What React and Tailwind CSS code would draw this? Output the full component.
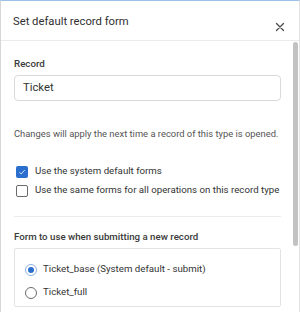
export default function App() {
  return (
    <div
      className="w-[300px] h-[312px] bg-white border-t border-t-[#9cc0e6] border-l border-l-[#d6d6d6] border-r border-r-[#e3e3e3] flex flex-col overflow-hidden text-[#333]"
      style={{ fontFamily: "Roboto, 'Liberation Sans', sans-serif" }}
    >
      <div className="h-[40px] shrink-0 border-b border-[#ebebeb] flex justify-between pl-[12px] pr-[14px]">
        <div className="pt-[12px] text-[11.25px] leading-[18px] text-[#2f2f2f]">Set default record form</div>
        <div className="pt-[21px]">
          <svg width="10" height="10" viewBox="0 0 10 10" className="block">
            <path d="M1.5 1.5 L8.5 8.5 M8.5 1.5 L1.5 8.5" stroke="#4a4a4a" strokeWidth="1.3" strokeLinecap="round" />
          </svg>
        </div>
      </div>
      <div className="flex flex-1 min-h-0">
        <div className="flex-1 min-w-0 pl-[13px] pr-[12px] flex flex-col">
          <div className="pt-[15px] text-[9.75px] leading-[16px] font-medium text-[#3a3a3a]">Record</div>
          <div className="mt-[3px] h-[26px] border border-[#d9d9d9] rounded-[4px] flex items-center pl-[8px] text-[11.25px] text-[#333]">
            Ticket
          </div>
          <div className="mt-[26px] text-[9.4px] leading-[14px] text-[#555] whitespace-nowrap">
            Changes will apply the next time a record of this type is opened.
          </div>
          <div className="mt-[21px] flex flex-col">
            <div className="h-[19px] flex items-center">
              <div className="shrink-0 ml-[2px] w-[12px] h-[12px] rounded-[2px] bg-[#2a6fce] flex items-center justify-center">
                <svg width="8" height="8" viewBox="0 0 8 8">
                  <path d="M1.3 4.2 L3.2 6 L6.8 2" stroke="#dfe9f8" strokeWidth="0.9" fill="none" />
                </svg>
              </div>
              <span className="ml-[7px] text-[9.7px] text-[#333] whitespace-nowrap">Use the system default forms</span>
            </div>
            <div className="h-[19px] flex items-center">
              <div className="shrink-0 ml-[2px] w-[12px] h-[12px] rounded-[2px] border border-[#6b6b6b]" />
              <span className="ml-[7px] text-[9.7px] text-[#333] whitespace-nowrap">Use the same forms for all operations on this record type</span>
            </div>
          </div>
          <div className="mt-[16px] border-t border-[#ececec]" />
          <div className="mt-[12px] text-[9.7px] leading-[16px] font-medium text-[#3a3a3a]">
            Form to use when submitting a new record
          </div>
          <div className="mt-[3px] border border-[#e3e3e3] rounded-[2px] pt-[9px] pb-[2px] pl-[10px]">
            <div className="h-[23px] flex items-center">
              <div className="shrink-0 w-[12px] h-[12px] rounded-full border border-[#8fb3e3] flex items-center justify-center">
                <div className="w-[6px] h-[6px] rounded-full bg-[#2a6fce]" />
              </div>
              <span className="ml-[6px] text-[9.7px] text-[#333] whitespace-nowrap">Ticket_base (System default - submit)</span>
            </div>
            <div className="h-[23px] flex items-center">
              <div className="shrink-0 w-[12px] h-[12px] rounded-full border border-[#6b6b6b]" />
              <span className="ml-[6px] text-[9.7px] text-[#333] whitespace-nowrap">Ticket_full</span>
            </div>
          </div>
        </div>
        <div className="w-[6px] shrink-0 pt-[1px]">
          <div className="h-[204px] w-[5px] rounded-[3px] bg-[#c2c2c2]" />
        </div>
      </div>
    </div>
  );
}
